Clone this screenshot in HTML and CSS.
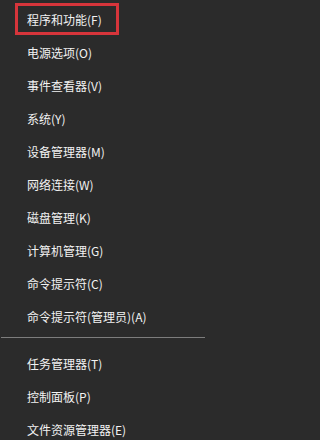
FILE: index.html
```html
<!DOCTYPE html>
<html lang="zh-CN">
<head>
<meta charset="utf-8">
<title>菜单</title>
<link rel="stylesheet" href="styles.css">
</head>
<body>
<ul class="menu">
  <li class="item"><span class="mark">程序和功能(F)</span></li>
  <li class="item">电源选项(O)</li>
  <li class="item">事件查看器(V)</li>
  <li class="item">系统(Y)</li>
  <li class="item">设备管理器(M)</li>
  <li class="item">网络连接(W)</li>
  <li class="item">磁盘管理(K)</li>
  <li class="item">计算机管理(G)</li>
  <li class="item">命令提示符(C)</li>
  <li class="item">命令提示符(管理员)(A)</li>
  <li class="sep"></li>
  <li class="item">任务管理器(T)</li>
  <li class="item">控制面板(P)</li>
  <li class="item">文件资源管理器(E)</li>
</ul>
</body>
</html>
```
FILE: styles.css
```css
html, body {
  margin: 0;
  padding: 0;
  background: #2b2b2b;
}
body {
  width: 205px;
  height: 440px;
  overflow: hidden;
  font-family: "Noto Sans CJK SC", "Noto Sans", sans-serif;
  font-size: 12px;
  color: #f2f2f2;
}
.menu {
  list-style: none;
  margin: 0;
  padding: 3px 0 0 0;
}
.item {
  display: flex;
  align-items: center;
  height: 33px;
  padding-left: 27px;
  white-space: nowrap;
}
.mark {
  display: flex;
  align-items: center;
  box-sizing: border-box;
  height: 32px;
  margin-left: -12px;
  margin-top: -1px;
  padding: 0 14px 0 9px;
  border: 3px solid #d6353b;
}
.sep {
  height: 10px;
  position: relative;
}
.sep::after {
  content: "";
  display: block;
  margin-top: 4px;
  margin-left: 1px;
  height: 1px;
  background: #7d7d7d;
}
```
